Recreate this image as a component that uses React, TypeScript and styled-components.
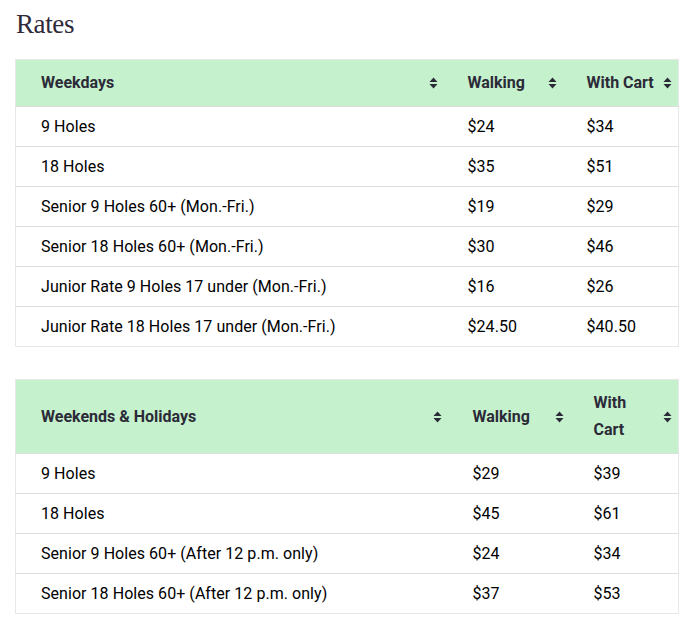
import React from "react";
import styled, { createGlobalStyle } from "styled-components";

const Global = createGlobalStyle`
  html, body { margin: 0; padding: 0; background: #fff; }
  body { font-family: Roboto, "Liberation Sans", sans-serif; color: #1c1c1c; }
`;

const Page = styled.div`
  padding: 8px 10px 0 15px;
  width: 663px;
`;

const Title = styled.h2`
  margin: 0 0 19px 1px;
  font-family: "Liberation Serif", "DejaVu Serif", serif;
  font-weight: 400;
  font-size: 27px;
  line-height: 32px;
  color: #2f2a3a;
  letter-spacing: -0.4px;
`;

const Table = styled.table`
  width: 663px;
  table-layout: fixed;
  border-collapse: collapse;
  border: 1px solid #e8e8e8;
  margin-bottom: 32px;
  font-size: 16px;
`;

const Head = styled.th`
  position: relative;
  background: #c6f1cd;
  color: #2b2b38;
  font-weight: 700;
  text-align: left;
  padding: 9px 22px 10px 25px;
  line-height: 27px;
`;

const Cell = styled.td`
  padding: 8px 22px 8px 25px;
  line-height: 23px;
  border-top: 1px solid #dedede;
  color: #000;
  letter-spacing: 0.05px;
`;

const SortWrap = styled.span<{ $r: number }>`
  position: absolute;
  right: ${(p) => p.$r}px;
  top: 50%;
  transform: translateY(-50%);
  display: flex;
`;

const Sort = ({ r }: { r: number }) => (
  <SortWrap $r={r}>
    <svg width="9" height="12" viewBox="0 0 9 12">
      <path d="M4.5 0.5 L8.5 5 L0.5 5 Z" fill="#2b2b38" />
      <path d="M0.5 7 L8.5 7 L4.5 11.5 Z" fill="#2b2b38" />
    </svg>
  </SortWrap>
);

type Row = [string, string, string];

const RateTable = ({
  title,
  widths,
  rows,
  icons,
}: {
  title: string;
  widths: number[];
  rows: Row[];
  icons: number[];
}) => (
  <Table>
    <colgroup>
      {widths.map((w, i) => (
        <col key={i} style={{ width: w }} />
      ))}
    </colgroup>
    <thead>
      <tr>
        <Head>
          {title}
          <Sort r={icons[0]} />
        </Head>
        <Head>
          Walking
          <Sort r={icons[1]} />
        </Head>
        <Head>
          With Cart
          <Sort r={icons[2]} />
        </Head>
      </tr>
    </thead>
    <tbody>
      {rows.map((r, i) => (
        <tr key={i}>
          <Cell>{r[0]}</Cell>
          <Cell>{r[1]}</Cell>
          <Cell>{r[2]}</Cell>
        </tr>
      ))}
    </tbody>
  </Table>
);

export default function App() {
  return (
    <>
      <Global />
      <Page>
        <Title>Rates</Title>
        <RateTable
          title="Weekdays"
          widths={[427, 119, 117]}
          icons={[5, 5, 6]}
          rows={[
            ["9 Holes", "$24", "$34"],
            ["18 Holes", "$35", "$51"],
            ["Senior 9 Holes 60+ (Mon.-Fri.)", "$19", "$29"],
            ["Senior 18 Holes 60+ (Mon.-Fri.)", "$30", "$46"],
            ["Junior Rate 9 Holes 17 under (Mon.-Fri.)", "$16", "$26"],
            ["Junior Rate 18 Holes 17 under (Mon.-Fri.)", "$24.50", "$40.50"],
          ]}
        />
        <RateTable
          title="Weekends & Holidays"
          widths={[432, 121, 110]}
          icons={[6, 5, 6]}
          rows={[
            ["9 Holes", "$29", "$39"],
            ["18 Holes", "$45", "$61"],
            ["Senior 9 Holes 60+ (After 12 p.m. only)", "$24", "$34"],
            ["Senior 18 Holes 60+ (After 12 p.m. only)", "$37", "$53"],
          ]}
        />
      </Page>
    </>
  );
}
